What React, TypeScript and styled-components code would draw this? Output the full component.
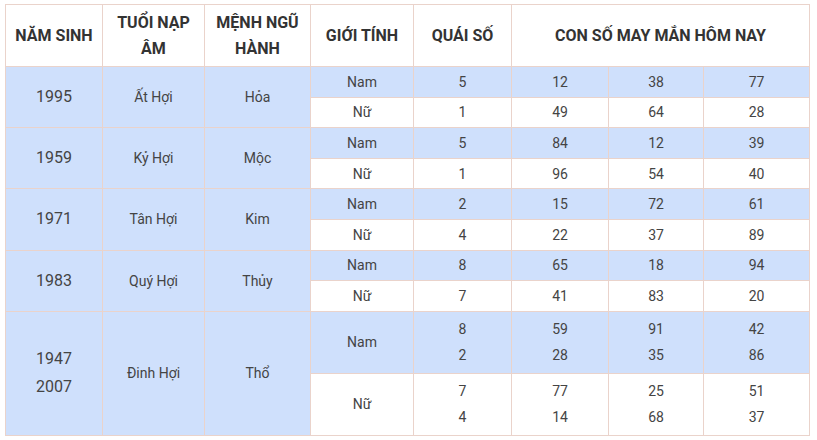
import React from "react";
import styled, {createGlobalStyle} from "styled-components";

const GlobalStyle = createGlobalStyle`
  body {
    margin: 0;
    background: #fff;
    font-family: Roboto, "Liberation Sans", Arial, sans-serif;
  }
`;

const Wrapper = styled.div`
  padding: 4px 0 0 5px;
`;

const Table = styled.table`
  width: 804px;
  border-collapse: collapse;
  table-layout: fixed;
  border: 1px solid #dccbc6;
  color: #444;
`;

const Col = styled.col<{$w: number}>`
  width: ${(p) => p.$w}px;
`;

const HeadCell = styled.th`
  height: 61px;
  padding: 0 6px;
  border: 1px solid #ead3cb;
  font-size: 16px;
  font-weight: 700;
  line-height: 26px;
  color: #333;
  text-transform: uppercase;
  background: #fff;
`;

const Cell = styled.td<{$blue?: boolean; $big?: boolean; $tall?: boolean}>`
  height: ${(p) => (p.$tall ? "61px" : "29.6px")};
  padding: 0 4px;
  border: 1px solid #ead3cb;
  text-align: center;
  vertical-align: middle;
  font-size: ${(p) => (p.$big ? "16px" : "14px")};
  line-height: ${(p) => (p.$big ? "28px" : "26px")};
  background: ${(p) => (p.$blue ? "#cfe0fc" : "#fff")};
`;

type Sub = {gender: string; qs: number[]; nums: number[][]};
type Group = {years: string[]; napAm: string; menh: string; rows: Sub[]};

const colWidths = [97, 102, 106, 103, 98, 97, 95, 106];

const data: Group[] = [
  {
    years: ["1995"], napAm: "Ất Hợi", menh: "Hỏa",
    rows: [
      {gender: "Nam", qs: [5], nums: [[12], [38], [77]]},
      {gender: "Nữ", qs: [1], nums: [[49], [64], [28]]},
    ],
  },
  {
    years: ["1959"], napAm: "Kỷ Hợi", menh: "Mộc",
    rows: [
      {gender: "Nam", qs: [5], nums: [[84], [12], [39]]},
      {gender: "Nữ", qs: [1], nums: [[96], [54], [40]]},
    ],
  },
  {
    years: ["1971"], napAm: "Tân Hợi", menh: "Kim",
    rows: [
      {gender: "Nam", qs: [2], nums: [[15], [72], [61]]},
      {gender: "Nữ", qs: [4], nums: [[22], [37], [89]]},
    ],
  },
  {
    years: ["1983"], napAm: "Quý Hợi", menh: "Thủy",
    rows: [
      {gender: "Nam", qs: [8], nums: [[65], [18], [94]]},
      {gender: "Nữ", qs: [7], nums: [[41], [83], [20]]},
    ],
  },
  {
    years: ["1947", "2007"], napAm: "Đinh Hợi", menh: "Thổ",
    rows: [
      {gender: "Nam", qs: [8, 2], nums: [[59, 28], [91, 35], [42, 86]]},
      {gender: "Nữ", qs: [7, 4], nums: [[77, 14], [25, 68], [51, 37]]},
    ],
  },
];

const Lines = ({items}: {items: (string | number)[]}) => (
  <>
    {items.map((v, i) => (
      <React.Fragment key={i}>
        {i > 0 && <br/>}
        {v}
      </React.Fragment>
    ))}
  </>
);

export default function App() {
  return (
    <Wrapper>
      <GlobalStyle/>
      <Table>
        <colgroup>
          {colWidths.map((w, i) => <Col key={i} $w={w}/>)}
        </colgroup>
        <thead>
          <tr>
            <HeadCell>Năm sinh</HeadCell>
            <HeadCell>Tuổi nạp âm</HeadCell>
            <HeadCell>Mệnh ngũ hành</HeadCell>
            <HeadCell>Giới tính</HeadCell>
            <HeadCell>Quái số</HeadCell>
            <HeadCell colSpan={3}>Con số may mắn hôm nay</HeadCell>
          </tr>
        </thead>
        <tbody>
          {data.map((g) =>
            g.rows.map((r, i) => {
              const tall = g.years.length > 1;
              const blue = i === 0;
              return (
                <tr key={g.napAm + r.gender}>
                  {i === 0 && (
                    <>
                      <Cell rowSpan={2} $blue $big>
                        <Lines items={g.years}/>
                      </Cell>
                      <Cell rowSpan={2} $blue>{g.napAm}</Cell>
                      <Cell rowSpan={2} $blue>{g.menh}</Cell>
                    </>
                  )}
                  <Cell $blue={blue} $tall={tall}>{r.gender}</Cell>
                  <Cell $blue={blue} $tall={tall}><Lines items={r.qs}/></Cell>
                  {r.nums.map((n, j) => (
                    <Cell key={j} $blue={blue} $tall={tall}><Lines items={n}/></Cell>
                  ))}
                </tr>
              );
            })
          )}
        </tbody>
      </Table>
    </Wrapper>
  );
}
